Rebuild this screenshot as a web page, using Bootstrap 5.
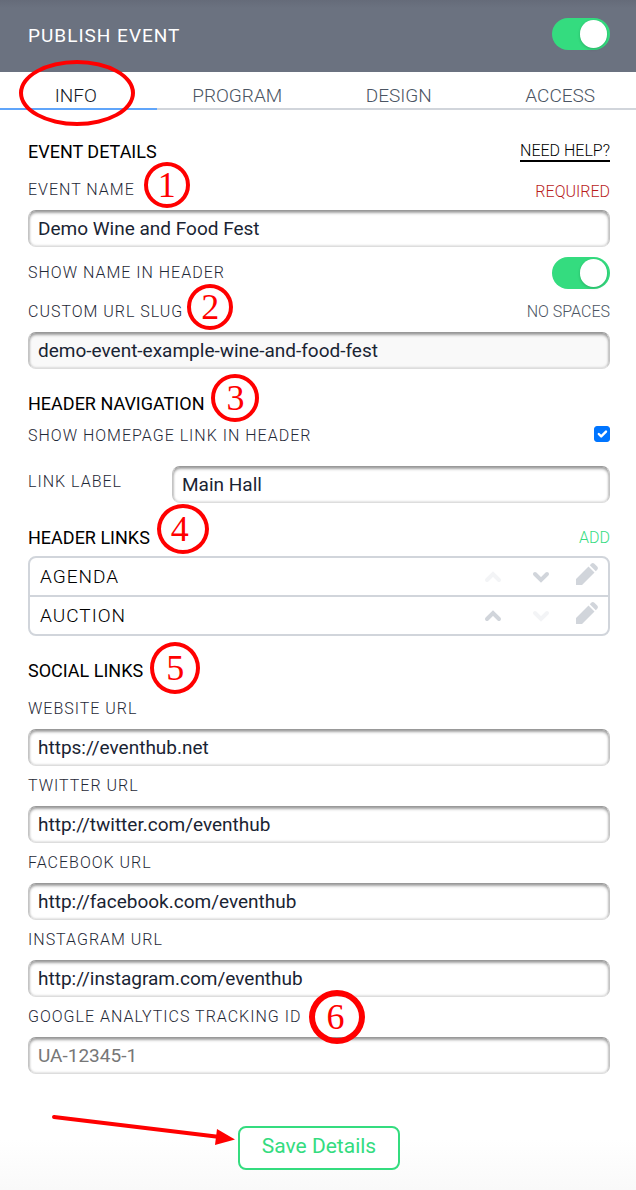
<!DOCTYPE html>
<html lang="en">
<head>
<meta charset="utf-8">
<meta name="viewport" content="width=device-width, initial-scale=1">
<title>Publish Event</title>
<link href="https://cdn.jsdelivr.net/npm/bootstrap@5.3.0/dist/css/bootstrap.min.css" rel="stylesheet">
<style>
  body { font-family: Roboto, "Liberation Sans", sans-serif; color: #000; min-height: 100vh; overflow-x: hidden; background: linear-gradient(to top, #f9f9f9, #fff 50px) #fff; }
  .topbar { height: 72px; padding: 0 26px 4px 28px; background: linear-gradient(#656b79, #6b7280 8px); }
  .topbar h1 { padding-top: 3px; font-size: 19px; font-weight: 400; letter-spacing: 1px; line-height: 28px; }

  .toggle.form-check-input { width: 58px; height: 32px; border: 0; border-radius: 16px; background: #34dc7f; position: relative; }
  .toggle::before { content: ""; position: absolute; top: 2px; right: 3px; width: 27px; height: 28px; border-radius: 14px; background: #fff; box-shadow: 0 1px 3px #0003; }

  .tabstrip { margin: 0 -5px; }
  .tabstrip .nav-link { width: 100%; height: 38px; padding: 5px 0 0; border-radius: 0; border-bottom: 2px solid #d1d5db; font-size: 19px; font-weight: 300; line-height: 38px; text-align: center; color: #4b5563; }
  .tabstrip .nav-link.active { color: #111827; border-color: #60a5fa; }

  .panel { padding: 29px 26px 20px 28px; }
  .group-title { display: flex; justify-content: space-between; align-items: center; height: 24px; padding-top: 2px; margin-bottom: 7px; }
  .group-title h2 { font-size: 18px; font-weight: 400; line-height: 24px; }
  .group + .group { margin-top: 22px; }
  .caption { font-size: 16px; font-weight: 300; line-height: 24px; letter-spacing: 1px; color: #1f2937; }
  .caption-row { display: flex; justify-content: space-between; align-items: center; height: 40px; }
  .toggle-row { height: 45px; padding-top: 7px; }
  .check-row { height: 28px; }
  .side { font-size: 16px; font-weight: 300; line-height: 24px; text-decoration: none; }
  .help { line-height: 18px; color: #000; border-bottom: 2px solid #000; }
  .required { color: #b91c1c; }
  .muted { color: #4b5563; }
  .green { color: #34dc7f; }

  .field.form-control { height: 37px; padding: 0 9px; font-size: 19px; line-height: 24px; color: #1a2433; border: 1px solid; border-color: #999 #c4c4c4 #ddd; border-radius: 8px; box-shadow: inset 0 2px 3px #0005, inset 0 0 3px #0003; }
  .field.form-control::placeholder { color: #777; }
  .field.form-control[readonly] { background: #f9f9f9; }
  .label-col { width: 144px; }
  .homepage.form-check-input { width: 16px; height: 16px; border-radius: 3px; background-size: 16px; }
  .homepage.form-check-input:checked { background-color: #0075ff; border-color: #0075ff; }

  .link-list { border: 2px solid #d1d5db; border-radius: 8px; }
  .link-list li { height: 37px; padding: 0 10px; gap: 24px; font-size: 19px; font-weight: 300; letter-spacing: 1px; }
  .link-list li > span { padding-top: 2px; }
  .link-list li + li { height: 39px; border-top: 2px solid #d1d5db; }
  .tool { padding: 0; border: 0; background: none; color: #d1d5db; line-height: 0; }
  .tool:disabled { color: #f3f4f6; }

  .save { width: 162px; height: 44px; padding: 0 0 2px; font-size: 21px; border: 2px solid #34dc7f; border-radius: 8px; background: #fff; color: #34dc7f; }
  .save-row { margin-top: 52px; }

  /* Walkthrough marks laid over the form */
  .spot { position: relative; }
  .step { position: absolute; left: 100%; top: 50%; z-index: 2; display: flex; justify-content: center; align-items: center; width: 48px; height: 48px; margin: -30px 0 0 7px; border: 4px solid #f00; border-radius: 50%; font: 400 36px/40px "Liberation Serif", serif; letter-spacing: 0; color: #f00; pointer-events: none; }
  .step-sm { width: 46px; height: 46px; margin: -28px 0 0 4px; }
  .step-lg { width: 52px; height: 50px; margin-top: -34px; padding-right: 6px; }
  .step-tall { width: 50px; height: 52px; margin-top: -29px; }
  .step-wide { margin-left: 9px; }
  .step-bold { width: 56px; height: 54px; margin: -27px 0 0 8px; padding-right: 4px; border-width: 6px; }
  .tab-ring { position: absolute; left: 24px; top: -12px; z-index: 2; width: 116px; height: 66px; border: 4px solid #f00; border-radius: 50%; pointer-events: none; }
  .arrow { position: absolute; right: 100%; top: -14px; margin-right: 1px; }
</style>
</head>
<body>
<header class="topbar d-flex justify-content-between align-items-center">
  <h1 class="m-0 text-white"><label for="publish">PUBLISH EVENT</label></h1>
  <input class="form-check-input toggle m-0" type="checkbox" role="switch" id="publish" checked>
</header>
<nav class="tabstrip nav">
  <div class="nav-item spot col"><a class="nav-link active" href="#info" aria-current="page">INFO</a><span class="tab-ring"></span></div>
  <div class="nav-item col"><a class="nav-link" href="#program">PROGRAM</a></div>
  <div class="nav-item col"><a class="nav-link" href="#design">DESIGN</a></div>
  <div class="nav-item col"><a class="nav-link" href="#access">ACCESS</a></div>
</nav>
<main>
<form class="panel" id="info">
  <section class="group">
    <div class="group-title"><h2 class="m-0">EVENT DETAILS</h2><a class="side help" href="#help">NEED HELP?</a></div>
    <div class="caption-row"><label class="caption spot" for="name">EVENT NAME<span class="step step-sm step-wide">1</span></label><span class="side required pt-1">REQUIRED</span></div>
    <input class="form-control field" id="name" type="text" value="Demo Wine and Food Fest">
    <div class="caption-row toggle-row"><label class="caption" for="showname">SHOW NAME IN HEADER</label><input class="form-check-input toggle m-0" type="checkbox" role="switch" id="showname" checked></div>
    <div class="caption-row"><label class="caption spot" for="slug">CUSTOM URL SLUG<span class="step step-sm">2</span></label><span class="side muted">NO SPACES</span></div>
    <input class="form-control field" id="slug" type="text" value="demo-event-example-wine-and-food-fest" readonly>
  </section>

  <section class="group">
    <div class="group-title"><h2 class="m-0 spot">HEADER NAVIGATION<span class="step">3</span></h2></div>
    <div class="caption-row check-row"><label class="caption" for="homepage">SHOW HOMEPAGE LINK IN HEADER</label><input class="form-check-input homepage mt-0 mb-1" type="checkbox" id="homepage" checked></div>
    <div class="d-flex align-items-start mt-3"><label class="caption label-col flex-shrink-0 pt-1" for="linklabel">LINK LABEL</label><input class="form-control field" id="linklabel" type="text" value="Main Hall"></div>
  </section>

  <section class="group">
    <div class="group-title"><h2 class="m-0 spot">HEADER LINKS<span class="step step-lg">4</span></h2><a class="side green" href="#add">ADD</a></div>
    <ul class="link-list list-unstyled m-0">
      <li class="d-flex align-items-center">
        <span class="me-auto">AGENDA</span>
        <button class="tool" type="button" aria-label="Move up" disabled><svg width="24" height="24" fill="none" stroke="currentColor" stroke-width="4" stroke-linecap="round"><path d="M7 15l6-6 6 6"/></svg></button>
        <button class="tool" type="button" aria-label="Move down"><svg width="24" height="24" fill="none" stroke="currentColor" stroke-width="4" stroke-linecap="round"><path d="M7 9l6 6 6-6"/></svg></button>
        <button class="tool" type="button" aria-label="Edit"><svg width="22" height="28" fill="currentColor"><path d="M0 22v-6L12.500 3.500l6 6L6 22zM13.800 2.200l1.400-1.400q1.600-1.400 3.200 0l2.800 2.800q1.400 1.600 0 3.200l-1.400 1.400z"/></svg></button>
      </li>
      <li class="d-flex align-items-center">
        <span class="me-auto">AUCTION</span>
        <button class="tool" type="button" aria-label="Move up"><svg width="24" height="24" fill="none" stroke="currentColor" stroke-width="4" stroke-linecap="round"><path d="M7 15l6-6 6 6"/></svg></button>
        <button class="tool" type="button" aria-label="Move down" disabled><svg width="24" height="24" fill="none" stroke="currentColor" stroke-width="4" stroke-linecap="round"><path d="M7 9l6 6 6-6"/></svg></button>
        <button class="tool" type="button" aria-label="Edit"><svg width="22" height="28" fill="currentColor"><path d="M0 22v-6L12.500 3.500l6 6L6 22zM13.800 2.200l1.400-1.400q1.600-1.400 3.200 0l2.800 2.800q1.400 1.600 0 3.200l-1.400 1.400z"/></svg></button>
      </li>
    </ul>
  </section>

  <section class="group">
    <div class="group-title"><h2 class="m-0 spot">SOCIAL LINKS<span class="step step-tall">5</span></h2></div>
    <div class="caption-row"><label class="caption" for="website">WEBSITE URL</label></div>
    <input class="form-control field" id="website" type="url" value="https://eventhub.net">
    <div class="caption-row"><label class="caption" for="twitter">TWITTER URL</label></div>
    <input class="form-control field" id="twitter" type="url" value="http://twitter.com/eventhub">
    <div class="caption-row"><label class="caption" for="facebook">FACEBOOK URL</label></div>
    <input class="form-control field" id="facebook" type="url" value="http://facebook.com/eventhub">
    <div class="caption-row"><label class="caption" for="instagram">INSTAGRAM URL</label></div>
    <input class="form-control field" id="instagram" type="url" value="http://instagram.com/eventhub">
    <div class="caption-row"><label class="caption spot" for="analytics">GOOGLE ANALYTICS TRACKING ID<span class="step step-bold">6</span></label></div>
    <input class="form-control field" id="analytics" type="text" placeholder="UA-12345-1">
  </section>

  <div class="save-row d-flex justify-content-center">
    <div class="spot">
      <svg class="arrow" width="186" height="40" aria-hidden="true"><path d="M3 5l166 20" stroke="#f00" stroke-width="4" stroke-linecap="round"/><path d="M166 17l18 10.500L164 33z" fill="#f00"/></svg>
      <button class="btn save" type="button">Save Details</button>
    </div>
  </div>
</form>
</main>
<script src="https://cdn.jsdelivr.net/npm/bootstrap@5.3.0/dist/js/bootstrap.bundle.min.js"></script>
</body>
</html>
